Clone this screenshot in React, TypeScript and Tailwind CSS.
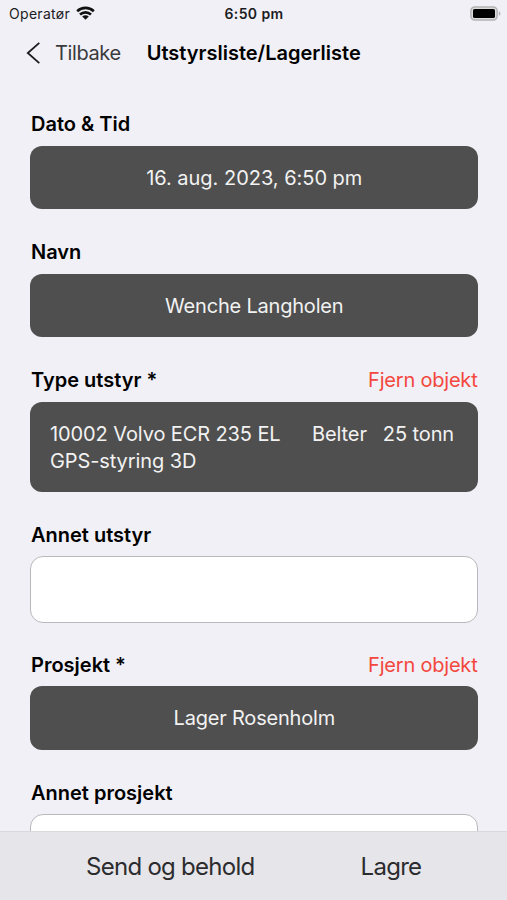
import type { ReactNode } from 'react'

interface FieldProps {
    label: string
    removable?: boolean
    className?: string
    children: ReactNode
}

function Field({ label, removable = false, className = '', children }: FieldProps) {
    return (
        <section className={className}>
            <div className="flex h-9 items-start justify-between pt-[0.5px] pl-px leading-7">
                <h2 className="text-[20px] font-semibold text-black">{label}</h2>
                {removable ? (
                    <button className="text-[20px] tracking-[-0.2px] text-[#f4473d]">Fjern objekt</button>
                ) : null}
            </div>
            {children}
        </section>
    )
}

function ValueBox({ className = 'tracking-[-0.2px]', children }: { className?: string; children: ReactNode }) {
    return (
        <div className="flex h-[63.5px] items-center justify-center rounded-xl bg-[#4f4f4f] pt-px pl-px text-[20px] text-[#f2f2f2]">
            <span className={className}>{children}</span>
        </div>
    )
}

function TextInput() {
    return (
        <div className="-mx-[0.5px]">
            <input className="block h-[67px] w-full rounded-[13px] border-[1.5px] border-[#b9b9bd] bg-white px-5" />
        </div>
    )
}

function StatusBar() {
    return (
        <div className="grid h-7 grid-cols-3 items-center pr-1.5 pb-px pl-[9px] text-[14px] text-[#1c1c1e]">
            <div className="flex items-center gap-1.5">
                <span className="tracking-[0.3px]">Operatør</span>
                <svg className="mb-px" width="19" height="14" viewBox="0 0 19 14" fill="none" stroke="#111" strokeWidth="2.6">
                    <path d="M1.2 5.2C5.8 .7 13.2 .7 17.8 5.2" />
                    <path d="M4 8.5C7.2 5.6 11.8 5.6 15 8.5" />
                    <path d="M9.5 13.8L6.2 10.6C8.2 8.9 10.8 8.9 12.8 10.6Z" fill="#111" stroke="none" />
                </svg>
            </div>
            <span className="-ml-0.5 text-center font-semibold tracking-[0.4px]">6:50 pm</span>
            <svg className="mb-px justify-self-end" width="31" height="15" viewBox="0 0 31 15">
                <rect x=".9" y=".9" width="26.2" height="13.2" rx="4" fill="#dcdcde" stroke="#b2b2b4" strokeWidth="1.5" />
                <rect x="3" y="3" width="22" height="9" rx="1.6" fill="#000" />
                <path d="M28.8 5.2C31 6 31 9 28.8 9.8Z" fill="#b2b2b4" />
            </svg>
        </div>
    )
}

export default function App() {
    return (
        <div className="flex h-[900px] w-[507px] flex-col overflow-hidden bg-[#f1f0f6] font-['Inter','Liberation_Sans',sans-serif]">
            <StatusBar />

            <header className="flex h-[49px] items-center pl-[26px]">
                <button className="flex items-center text-[20px] tracking-[-0.4px] text-[#3a3a3c]">
                    <svg width="15" height="24" viewBox="0 0 15 24" fill="none" stroke="#1c1c1e" strokeWidth="1.8">
                        <path d="M13.3 1.8L1.8 12L13.3 22.2" />
                    </svg>
                    <span className="ml-3.5">Tilbake</span>
                </button>
                <h1 className="ml-[26px] text-[20px] font-semibold text-black">Utstyrsliste/Lagerliste</h1>
            </header>

            <main className="min-h-0 flex-1 overflow-hidden pt-[32.5px] pr-[29.5px] pl-[30px]">
                <Field label="Dato & Tid">
                    <ValueBox className="tracking-[-0.02px]">16. aug. 2023, 6:50 pm</ValueBox>
                </Field>

                <Field label="Navn" className="mt-[28.5px]">
                    <ValueBox>Wenche Langholen</ValueBox>
                </Field>

                <Field label="Type utstyr *" removable className="mt-[28.5px]">
                    <div className="flex h-[90.5px] items-start rounded-xl bg-[#4f4f4f] px-5 pt-[19px] text-[20px] leading-[27px] tracking-[-0.1px] text-[#f2f2f2]">
                        <p className="w-[262px]">
                            10002 Volvo ECR 235 EL
                            <br />
                            GPS-styring 3D
                        </p>
                        <span>Belter</span>
                        <span className="ml-4">25 tonn</span>
                    </div>
                </Field>

                <Field label="Annet utstyr" className="mt-7">
                    <TextInput />
                </Field>

                <Field label="Prosjekt *" removable className="mt-[27px]">
                    <ValueBox>Lager Rosenholm</ValueBox>
                </Field>

                <Field label="Annet prosjekt" className="mt-[28.5px]">
                    <TextInput />
                </Field>
            </main>

            <footer className="flex h-[69px] items-center border-t border-[#d9d9dc] bg-[#e6e5ea] pt-px pl-[86px] text-[24px] tracking-[-0.72px] text-[#2c2c2e]">
                <button>Send og behold</button>
                <button className="ml-[106px]">Lagre</button>
            </footer>
        </div>
    )
}
